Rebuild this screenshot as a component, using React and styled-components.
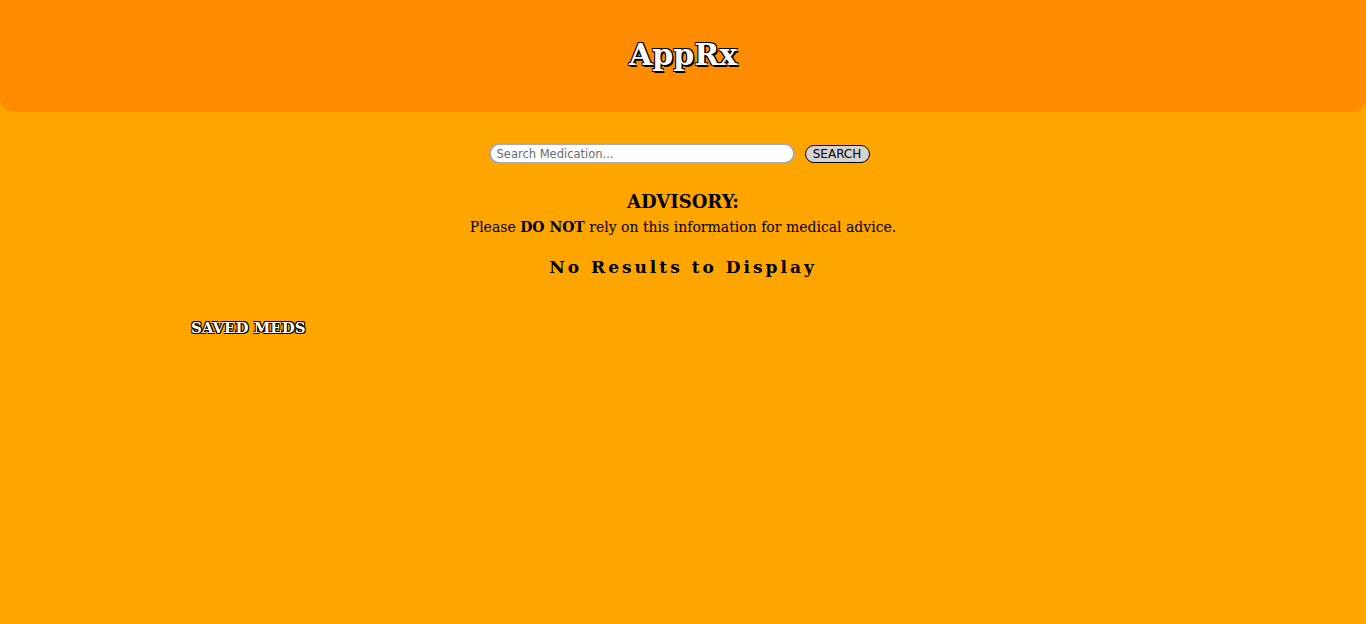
import React from 'react'
import styled, { createGlobalStyle } from 'styled-components';

const GlobalStyle = createGlobalStyle`
  html, body {
    margin: 0;
    padding: 0;
    background-color: #ffa500;
    font-family: "DejaVu Serif", Georgia, serif;
  }
`;

const Page = styled.div`
  min-height: 624px;
  background-color: #ffa500;
`;

const Header = styled.header`
  height: 112px;
  background-color: #ff8c00;
  border-radius: 0 0 14px 14px;
  display: flex;
  align-items: center;
  justify-content: center;
`;

const Title = styled.h1`
  margin: 0 0 3px;
  font-size: 30px;
  font-weight: bold;
  color: white;
  text-shadow: 1.5px 1.5px 0 #000, -1px -1px 0 #000, 1px -1px 0 #000, -1px 1px 0 #000;
`;

const SearchForm = styled.form`
  display: flex;
  justify-content: center;
  align-items: center;
  gap: 10px;
  margin-top: 31px;
  padding-right: 8px;
`;

const SearchInput = styled.input`
  width: 306px;
  height: 21px;
  box-sizing: border-box;
  border: 2px solid #aaa;
  border-radius: 11px;
  padding: 0 6px;
  font-family: "DejaVu Sans", Verdana, sans-serif;
  font-size: 11.5px;
  color: #333;
  &::placeholder { color: #6b6b6b; }
`;

const SearchButton = styled.button`
  height: 18px;
  width: 65px;
  box-sizing: border-box;
  border: 1px solid #000;
  border-radius: 9px;
  background: #d3d3d3;
  font-family: "DejaVu Sans", Verdana, sans-serif;
  font-size: 12px;
  padding: 0;
  color: #000;
`;

const Advisory = styled.section`
  text-align: center;
  margin-top: 26px;
`;

const AdvisoryTitle = styled.h3`
  margin: 0;
  font-size: 18px;
  font-weight: bold;
  line-height: 24px;
`;

const AdvisoryText = styled.p`
  margin: 0;
  font-size: 14px;
  line-height: 26px;
`;

const NoResults = styled.h4`
  margin: 15px 0 0;
  text-align: center;
  font-size: 17px;
  letter-spacing: 3px;
  line-height: 24px;
`;

const Saved = styled.section`
  padding-left: 191px;
  margin-top: 40px;
`;

const SavedTitle = styled.h5`
  margin: 0;
  font-size: 15px;
  color: white;
  font-weight: bold;
  text-shadow: 1px 1px 0 #000, -1px -1px 0 #000, 1px -1px 0 #000, -1px 1px 0 #000;
`;

export default function App() {
  return (
    <Page>
      <GlobalStyle />
      <Header>
        <Title>AppRx</Title>
      </Header>
      <SearchForm onSubmit={(e) => e.preventDefault()}>
        <SearchInput placeholder="Search Medication..." />
        <SearchButton type="submit">SEARCH</SearchButton>
      </SearchForm>
      <Advisory>
        <AdvisoryTitle>ADVISORY:</AdvisoryTitle>
        <AdvisoryText>Please <b>DO NOT</b> rely on this information for medical advice.</AdvisoryText>
      </Advisory>
      <NoResults>No Results to Display</NoResults>
      <Saved>
        <SavedTitle>SAVED MEDS</SavedTitle>
      </Saved>
    </Page>
  )
}
